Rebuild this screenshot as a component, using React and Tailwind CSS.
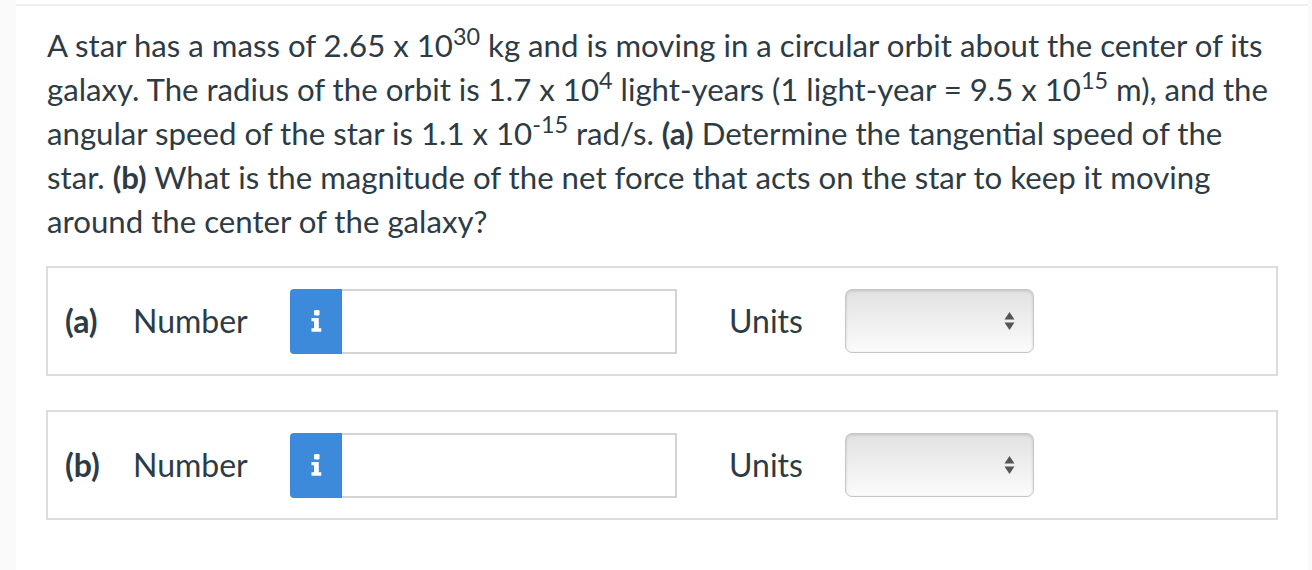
import React from "react";

function InfoIcon() {
  return (
    <svg width="11" height="22" viewBox="0 0 11 22" fill="white">
      <rect x="3" y="0" width="5.5" height="5.5" rx="1.2" />
      <path d="M0.5 8 H7.8 V18.3 H10.3 V21.8 H0.5 V18.3 H3 V11.3 H0.5 Z" />
    </svg>
  );
}

function Arrows() {
  return (
    <svg width="11" height="18" viewBox="0 0 11 18" fill="#555">
      <path d="M5.5 0 L10.5 7.5 H0.5 Z" />
      <path d="M0.5 10.5 H10.5 L5.5 18 Z" />
    </svg>
  );
}

function Row({ label }) {
  return (
    <div className="border-2 border-[#dcdcdc] h-[110px] flex items-center pl-[17px]">
      <span className="font-bold w-[68px]">{label}</span>
      <span className="w-[157px]">Number</span>
      <div className="flex h-[65px]">
        <div className="w-[52px] h-full bg-[#3c8ad9] rounded-l-[4px] flex items-center justify-center">
          <InfoIcon />
        </div>
        <div className="w-[335px] h-full border-2 border-l-0 border-[#d4d4d4] bg-white" />
      </div>
      <span className="ml-[52px] w-[116px]">Units</span>
      <div className="w-[189px] h-[64px] rounded-[7px] border border-[#c6c6c6] bg-gradient-to-b from-[#e2e2e2] to-[#fbfbfb] shadow-[inset_0_1px_3px_rgba(0,0,0,0.15)] flex items-center justify-end pr-[18px]">
        <Arrows />
      </div>
    </div>
  );
}

export default function App() {
  return (
    <div className="flex w-[1312px] h-[570px] bg-white text-[#2d3b45] font-['Lato',sans-serif]">
      <div className="w-[16px] h-full bg-[#fafafa]" />
      <div className="w-[1292px] h-full bg-white pt-[4px]">
        <div className="h-[2px] bg-[#eeeeee]" />
        <div className="px-[30px] pt-[17px]">
          <p className="text-[31.2px] leading-[44px] pl-[1px] mr-[-28px]">
            A star has a mass of 2.65 x 10<sup>30</sup> kg and is moving in a circular orbit about the center of its
            <br />
            galaxy. The radius of the orbit is 1.7 x 10<sup>4</sup> light-years (1 light-year = 9.5 x 10<sup>15</sup> m), and the
            <br />
            angular speed of the star is 1.1 x 10<sup>-15</sup> rad/s. <b>(a)</b> Determine the tangential speed of the
            <br />
            star. <b>(b)</b> What is the magnitude of the net force that acts on the star to keep it moving
            <br />
            around the center of the galaxy?
          </p>
          <div className="mt-[23px] flex flex-col gap-[34px] text-[32px]">
            <Row label="(a)" />
            <Row label="(b)" />
          </div>
        </div>
      </div>
      <div className="w-[4px] h-full bg-[#f9f9f9]" />
    </div>
  );
}
